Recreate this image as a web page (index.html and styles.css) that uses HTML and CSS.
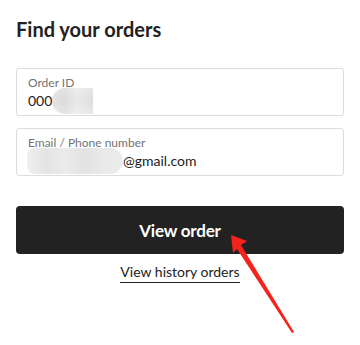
FILE: index.html
```html
<!DOCTYPE html>
<html lang="en">
<head>
<meta charset="utf-8">
<title>Find your orders</title>
<link rel="stylesheet" href="styles.css">
</head>
<body>
<main class="page">
  <h1 class="title">Find your orders</h1>
  <div class="field">
    <label class="field-label">Order ID</label>
    <div class="field-value">000<span class="blur blur-id"></span></div>
  </div>
  <div class="field field-email">
    <label class="field-label">Email / Phone number</label>
    <div class="field-value"><span class="blur blur-email"></span>@gmail.com</div>
  </div>
  <button class="btn">View order</button>
  <div class="links"><a class="history" href="#">View history orders</a></div>
  <svg class="arrow" width="360" height="345" viewBox="0 0 360 345" aria-hidden="true">
    <polygon points="231,235 247,241 241,245 294,332 292,333 237,249 233,253" fill="#f5231b"/>
  </svg>
</main>
</body>
</html>
```
FILE: styles.css
```css
* { box-sizing: border-box; }
html, body { margin: 0; padding: 0; background: #fff; }
body { font-family: Lato, "Open Sans", sans-serif; color: #222; }
.page {
  position: relative;
  width: 360px;
  height: 345px;
  padding: 17px 16px 0 16px;
  display: flex;
  flex-direction: column;
}
.title {
  margin: 0;
  font-size: 20px;
  line-height: 24px;
  font-weight: 700;
  color: #222;
}
.field {
  margin-top: 27px;
  height: 48px;
  border: 1px solid #dcdcdc;
  border-radius: 3px;
  padding: 6px 11px 6px 11px;
  display: flex;
  flex-direction: column;
  gap: 2px;
}
.field-email { margin-top: 12px; }
.field-label {
  font-size: 12px;
  line-height: 15px;
  color: #737373;
}
.field-value {
  font-size: 14px;
  line-height: 17px;
  color: #222;
  display: flex;
  align-items: center;
}
.blur {
  display: block;
  background:
    linear-gradient(90deg, rgba(255,255,255,0.0) 0, rgba(0,0,0,0.03) 30%, rgba(255,255,255,0.2) 60%, rgba(0,0,0,0.02) 100%),
    linear-gradient(180deg, #e9e9e9 0, #e2e2e2 50%, #ececec 100%);
}
.blur-id {
  width: 41px;
  height: 26px;
  margin: -5px 0;
  border-radius: 13px 0 0 13px;
}
.blur-email {
  width: 96px;
  height: 26px;
  margin: -5px 0 -5px -1px;
  border-radius: 8px 13px 13px 8px;
  background:
    linear-gradient(90deg, #efefef 0, #e4e4e4 20%, #ebebeb 40%, #e3e3e3 60%, #e9e9e9 80%, #ececec 100%);
}
.btn {
  margin-top: 30px;
  height: 48px;
  width: 100%;
  border: none;
  border-radius: 4px;
  background: #222222;
  color: #fff;
  font-family: Lato, "Open Sans", sans-serif;
  font-size: 17px;
  font-weight: 700;
  letter-spacing: -0.2px;
  padding: 0;
}
.links {
  margin-top: 9px;
  display: flex;
  justify-content: center;
}
.history {
  font-size: 14px;
  line-height: 17px;
  color: #222;
  text-decoration: none;
  border-bottom: 1px solid #222;
  padding-bottom: 2px;
}
.arrow {
  position: absolute;
  left: 0;
  top: 0;
  pointer-events: none;
}
```
